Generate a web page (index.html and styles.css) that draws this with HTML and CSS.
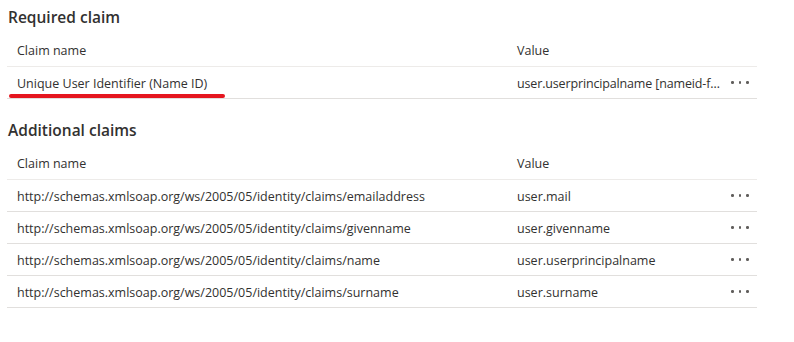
FILE: index.html
```html
<!DOCTYPE html>
<html lang="en">
<head>
<meta charset="utf-8">
<title>Claims</title>
<link rel="stylesheet" href="styles.css">
</head>
<body>
<main class="page">
  <section class="section">
    <h2 class="title">Required claim</h2>
    <div class="table">
      <div class="row head">
        <div class="cell">Claim name</div>
        <div class="cell">Value</div>
        <div class="cell"></div>
      </div>
      <div class="row">
        <div class="cell name">Unique User Identifier (Name ID)<span class="mark"></span></div>
        <div class="cell value">user.userprincipalname [nameid-f…</div>
        <div class="cell more"><span class="dots"><i></i><i></i><i></i></span></div>
      </div>
    </div>
  </section>
  <section class="section second">
    <h2 class="title">Additional claims</h2>
    <div class="table">
      <div class="row head">
        <div class="cell">Claim name</div>
        <div class="cell">Value</div>
        <div class="cell"></div>
      </div>
      <div class="row">
        <div class="cell">http://schemas.xmlsoap.org/ws/2005/05/identity/claims/emailaddress</div>
        <div class="cell">user.mail</div>
        <div class="cell more"><span class="dots"><i></i><i></i><i></i></span></div>
      </div>
      <div class="row">
        <div class="cell">http://schemas.xmlsoap.org/ws/2005/05/identity/claims/givenname</div>
        <div class="cell">user.givenname</div>
        <div class="cell more"><span class="dots"><i></i><i></i><i></i></span></div>
      </div>
      <div class="row">
        <div class="cell">http://schemas.xmlsoap.org/ws/2005/05/identity/claims/name</div>
        <div class="cell">user.userprincipalname</div>
        <div class="cell more"><span class="dots"><i></i><i></i><i></i></span></div>
      </div>
      <div class="row">
        <div class="cell">http://schemas.xmlsoap.org/ws/2005/05/identity/claims/surname</div>
        <div class="cell">user.surname</div>
        <div class="cell more"><span class="dots"><i></i><i></i><i></i></span></div>
      </div>
    </div>
  </section>
</main>
</body>
</html>
```

FILE: styles.css
```css
* { box-sizing: border-box; }
html, body { margin: 0; padding: 0; background: #ffffff; }
body {
  font-family: "Open Sans", "Noto Sans", "Liberation Sans", sans-serif;
  color: #323130;
  font-size: 12.5px;
}
.page {
  padding: 7px 0 0 7px;
  width: 757px;
}
.section.second { margin-top: 21px; }
.title {
  margin: 0 0 0 1px;
  font-size: 15.5px;
  font-weight: 600;
  line-height: 20px;
  height: 20px;
  color: #323130;
}
.table { margin-top: 7px; }
.row {
  display: grid;
  grid-template-columns: 500px 222px 28px;
  height: 32px;
  padding-top: 2px;
  align-items: center;
  border-bottom: 1px solid #e1dfdd;
}
.row.head {
  height: 33px;
  padding-top: 1px;
  border-bottom-color: #edebe9;
}
.cell {
  padding-left: 10px;
  white-space: nowrap;
  overflow: hidden;
  line-height: 18px;
}
.cell.value { letter-spacing: -0.15px; }
.cell.name { position: relative; overflow: visible; }
.mark {
  position: absolute;
  left: 2px;
  top: 19px;
  width: 216px;
  height: 4px;
  border-radius: 2px;
  background: #e5161f;
}
.more {
  padding-left: 0;
  overflow: visible;
  display: flex;
  justify-content: flex-start;
  align-items: center;
  height: 18px;
}
.dots { display: flex; gap: 5px; position: relative; top: -1px; left: 2px; }
.dots i {
  display: block;
  width: 2.5px;
  height: 2.5px;
  border-radius: 50%;
  background: #605e5c;
}
```
